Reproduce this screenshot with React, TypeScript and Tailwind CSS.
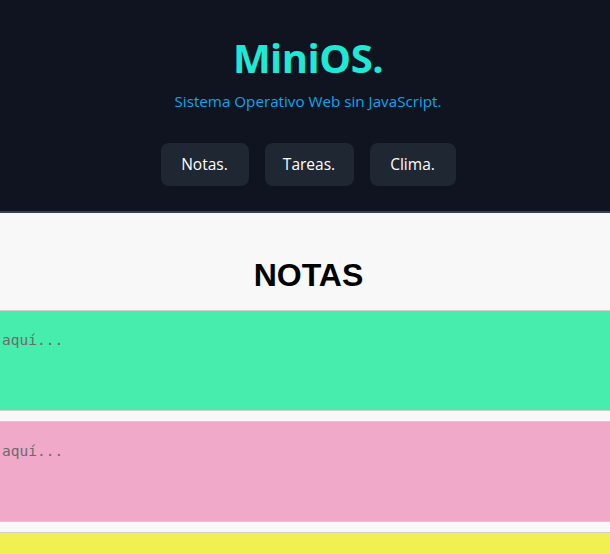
export default function App() {
  const notes = ['bg-[#46edad]', 'bg-[#f0a9c9]', 'bg-[#f0f053]']

  return (
    <div className="min-h-screen bg-[#f8f8f8] overflow-hidden" style={{ height: 554 }}>
      <header className="bg-[#0f1420] border-b-2 border-[#374151] h-[213px] pl-[6px] flex flex-col items-center font-['Open_Sans',sans-serif]">
        <h1 className="mt-[34px] text-[40px] leading-[48px] font-bold text-[#1de9d6] tracking-[-0.5px]">MiniOS.</h1>
        <p className="mt-[9px] text-[15.2px] leading-5 text-[#0ea5e9]">Sistema Operativo Web sin JavaScript.</p>
        <nav className="mt-[32px] flex gap-4">
          <button className="w-[88px] h-[43px] rounded-lg bg-[#1f2733] text-white text-[15.5px]">Notas.</button>
          <button className="w-[89px] h-[43px] rounded-lg bg-[#1f2733] text-white text-[15.5px]">Tareas.</button>
          <button className="w-[86px] h-[43px] rounded-lg bg-[#1f2733] text-white text-[15.5px]">Clima.</button>
        </nav>
      </header>

      <section className="bg-[#f8f8f8]">
        <h2 className="h-[97px] pt-[44px] pl-[7px] text-center text-[32px] leading-9 font-bold text-black font-['Liberation_Sans',Arial,sans-serif]">
          NOTAS
        </h2>
        <div className="flex flex-col gap-[10px]">
          {notes.map((bg, i) => (
            <div key={i} className={`${bg} h-[101px] border-y border-[#cfcfcf] pl-[2px] pt-[16px]`}>
              <span className="text-[14.5px] leading-5 text-[#6b6b6b] font-['DejaVu_Sans_Mono',monospace]">aquí...</span>
            </div>
          ))}
        </div>
      </section>
    </div>
  )
}
